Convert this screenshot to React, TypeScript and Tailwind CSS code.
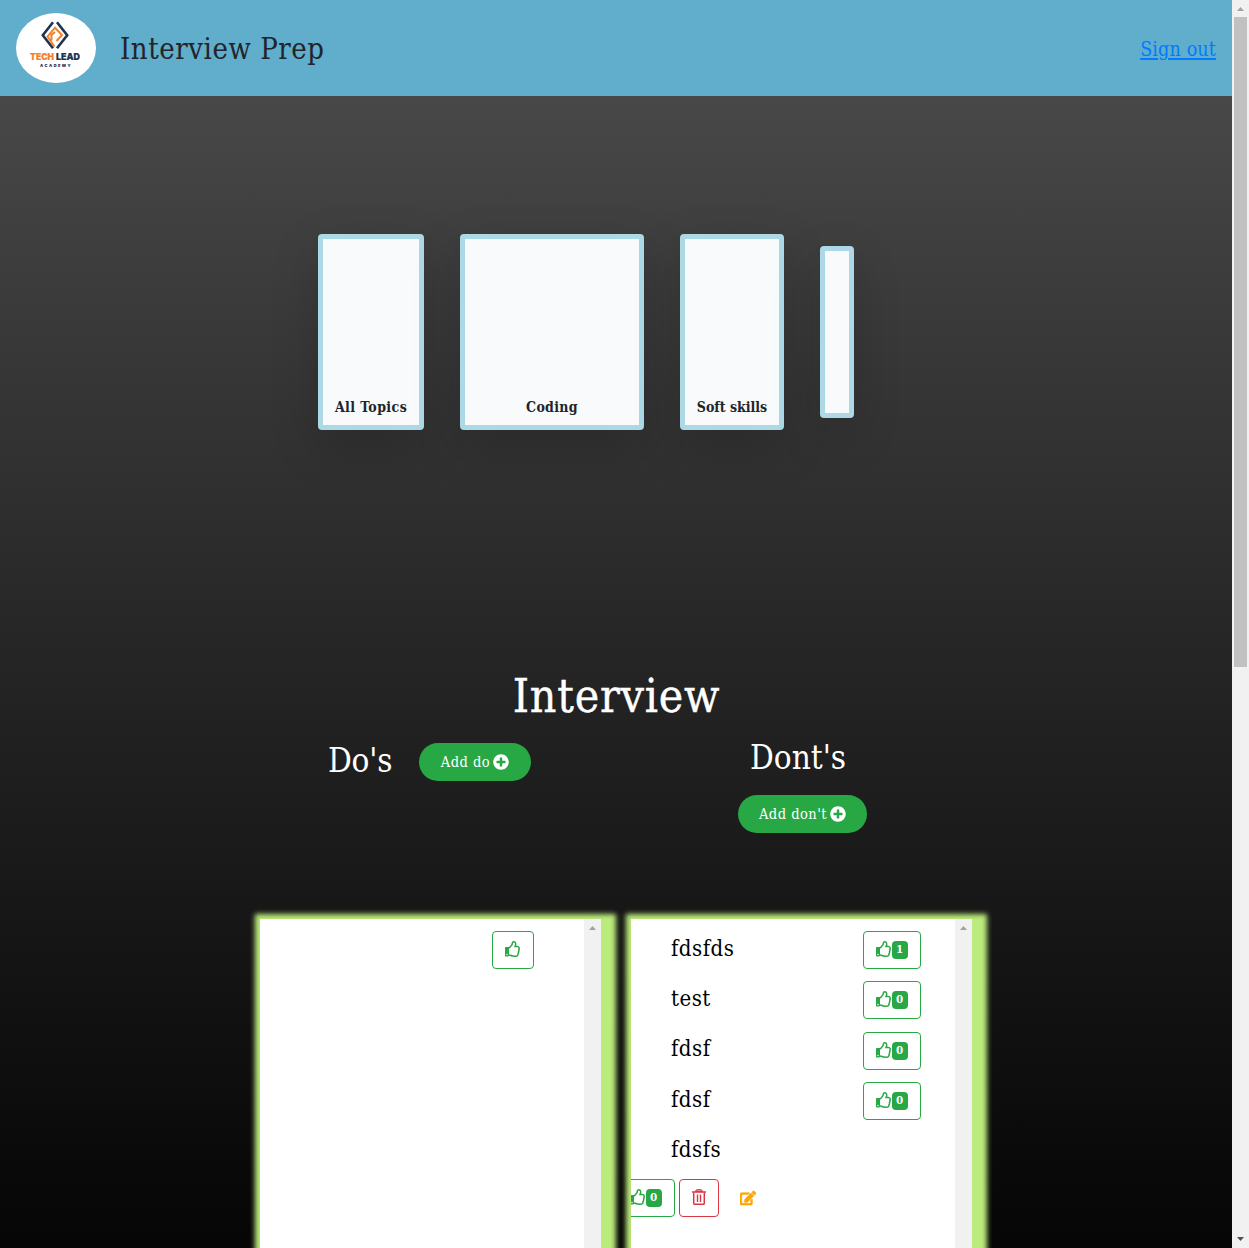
import React from 'react';
import { FaEdit, FaPlusCircle, FaRegThumbsUp } from 'react-icons/fa';

function Logo() {
  return (
    <svg className="h-[70px] w-20 shrink-0" viewBox="0 0 80 70">
      <ellipse cx="40" cy="35" rx="40" ry="35" fill="#fff" />
      <g fill="none" strokeWidth="2.6">
        <path d="M37 9.3 26.8 22.3 37 35.3M41 9.3 51.2 22.3 41 35.3" stroke="#1d3350" />
        <path d="M38.500 33.500 31.500 23.500 39 14.700 46 22 40.500 28M35.500 27.500V22L39 19" stroke="#f5822b" strokeWidth="2" />
      </g>
      <g fontFamily="Inter, sans-serif" fontWeight="900">
        <text x="14" y="47.3" fontSize="9.5" textLength="24" lengthAdjust="spacingAndGlyphs" fill="#f5822b" stroke="#f5822b" strokeWidth="0.2">TECH</text>
        <text x="40" y="47.3" fontSize="9.5" textLength="24" lengthAdjust="spacingAndGlyphs" fill="#1d3350" stroke="#1d3350" strokeWidth="0.2">LEAD</text>
        <text x="24" y="53.7" fontSize="4" textLength="30.5" fill="#1d3350">ACADEMY</text>
      </g>
    </svg>
  );
}

function TrashIcon() {
  return (
    <svg className="-mt-0.5 size-4" viewBox="0 0 16 16" fill="none" stroke="#dc3545">
      <path d="M4.5 2.6C4.7 1.2 5.5.6 6.500.6h3c1 0 1.800.6 2 2Z" fill="#e98a94" />
      <path d="M1 3h14" strokeWidth="1.5" />
      <path d="M2.700 3.500V14.200a1.100 1.100 0 0 0 1.100 1.100h8.400a1.100 1.100 0 0 0 1.100-1.100V3.500" strokeWidth="1.500" />
      <path d="M6.500 5.500v7.500M9.500 5.500v7.500" strokeWidth="1.400" />
    </svg>
  );
}

function Topic({ label, className }: { label?: string; className: string }) {
  return (
    <div
      className={`flex items-end justify-center rounded border-[5px] border-[#add8e6] bg-[#f8fafc] pb-[7px] text-[14px] font-bold text-[#212529] shadow-[0_16px_48px_rgba(0,0,0,0.175)] ${className}`}
    >
      {label && <span className="whitespace-nowrap leading-[22px]">{label}</span>}
    </div>
  );
}

function LikeButton({ count, className = '' }: { count?: number; className?: string }) {
  return (
    <button
      className={`flex h-[38px] shrink-0 items-center rounded border border-[#28a745] px-3 text-[#28a745] ${className}`}
    >
      <FaRegThumbsUp className="-mt-0.5 size-4" />
      {count !== undefined && (
        <span className="flex h-[18px] w-4 items-center justify-center rounded bg-[#28a745] pr-px text-[11.5px] font-bold text-white">
          {count}
        </span>
      )}
    </button>
  );
}

function AddButton({ label, className }: { label: string; className: string }) {
  return (
    <button
      className={`flex h-[38px] items-center justify-center gap-[3px] rounded-full bg-[#28a745] text-[14.5px] text-white ${className}`}
    >
      <span className="whitespace-nowrap pt-0.5 tracking-[0.5px]">{label}</span>
      <FaPlusCircle className="size-4" />
    </button>
  );
}

function Panel({ children }: { children: React.ReactNode }) {
  return (
    <div className="flex h-[329px] w-[341px] bg-white shadow-[5px_5px_5px_10px_#bbeb7c]">
      <div className="w-[324px] overflow-hidden">{children}</div>
      <div className="flex w-[17px] justify-center bg-[#f1f1f1] pt-[7px]">
        <svg className="h-1 w-[7px]" viewBox="0 0 7 4"><path d="M0 4 3.5 0 7 4Z" fill="#a3a3a3" /></svg>
      </div>
    </div>
  );
}

const donts = [
  { text: 'fdsfds', count: 1, row: 'h-[50px]', line: 'leading-9' },
  { text: 'test', count: 0, row: 'h-[51px]', line: 'leading-9' },
  { text: 'fdsf', count: 0, row: 'h-[50px]', line: 'leading-[34px]' },
  { text: 'fdsf', count: 0, row: 'h-[50px]', line: 'leading-9' },
];

export default function App() {
  return (
    <div className="flex h-[1248px] w-[1249px] overflow-hidden font-['DejaVu_Serif_Condensed','DejaVu_Serif',serif] [font-stretch:condensed]">
      <div className="flex w-[1232px] flex-col overflow-hidden">
        <header className="flex h-24 shrink-0 items-center bg-[#60adcc] px-4">
          <Logo />
          <h1 className="ml-6 whitespace-nowrap pt-1 text-[29px] tracking-[0.55px] text-[#212529]">Interview Prep</h1>
          <a href="#" className="ml-auto whitespace-nowrap pt-1 text-[19.5px] tracking-[0.15px] text-[#007bff] underline decoration-2 underline-offset-2">Sign out</a>
        </header>

        <main className="flex flex-1 flex-col bg-linear-to-b from-[#484848] to-[#060606]">
          <section className="mt-[138px] ml-[318px] flex items-center gap-9">
            <Topic label="All Topics" className="h-[196px] w-[106px] tracking-[0.4px]" />
            <Topic label="Coding" className="h-[196px] w-[184px] tracking-[0.3px]" />
            <Topic label="Soft skills" className="h-[196px] w-[104px]" />
            <Topic className="h-[172px] w-[34px]" />
          </section>

          <h2 className="mt-[236px] h-[60px] pl-px text-center text-[46px] leading-[60px] tracking-[0.8px] text-white [-webkit-text-stroke:0.4px_white]">Interview</h2>

          <section className="mt-[17px] grid h-[176px] grid-cols-[410px_1fr] pl-[328px] text-white">
            <div className="flex items-start">
              <h3 className="-mt-px w-[91px] whitespace-nowrap text-[33px] leading-[38px] tracking-[-0.2px]">Do's</h3>
              <AddButton label="Add do" className="w-28" />
            </div>
            <div className="-mt-1">
              <h3 className="ml-3 whitespace-nowrap text-[33px] leading-[38px]">Dont's</h3>
              <AddButton label="Add don't" className="mt-[18px] w-[129px]" />
            </div>
          </section>

          <section className="ml-[260px] flex gap-[30px]">
            <Panel>
              <LikeButton className="mt-3 ml-[232px]" />
            </Panel>
            <Panel>
              <ul className="pt-3 pl-10 tracking-[0.5px] text-black">
                {donts.map((item, i) => (
                  <li key={i} className={`flex ${item.row}`}>
                    <span className={`w-48 text-[22px] ${item.line}`}>{item.text}</span>
                    <LikeButton count={item.count} className="tracking-normal" />
                  </li>
                ))}
                <li className="h-[47px] text-[22px] leading-9">fdsfs</li>
              </ul>
              <div className="-ml-3.5 flex items-center">
                <LikeButton count={0} />
                <button className="ml-1 flex h-[38px] w-10 items-center justify-center rounded border border-[#dc3545] text-[#dc3545]">
                  <TrashIcon />
                </button>
                <FaEdit className="ml-[21px] size-4 text-[#ffa500]" stroke="currentColor" strokeWidth={18} />
              </div>
            </Panel>
          </section>
        </main>
      </div>

      <div className="flex w-[17px] flex-col items-center bg-[#f1f1f1]">
        <svg className="mt-[7px] h-1 w-[7px] shrink-0" viewBox="0 0 7 4"><path d="M0 4 3.5 0 7 4Z" fill="#a3a3a3" /></svg>
        <div className="mt-1.5 h-[650px] w-[13px] shrink-0 bg-[#c1c1c1]" />
        <svg className="mt-auto mb-[7px] h-1 w-[7px] shrink-0" viewBox="0 0 7 4"><path d="M0 0 3.5 4 7 0Z" fill="#505050" /></svg>
      </div>
    </div>
  );
}
